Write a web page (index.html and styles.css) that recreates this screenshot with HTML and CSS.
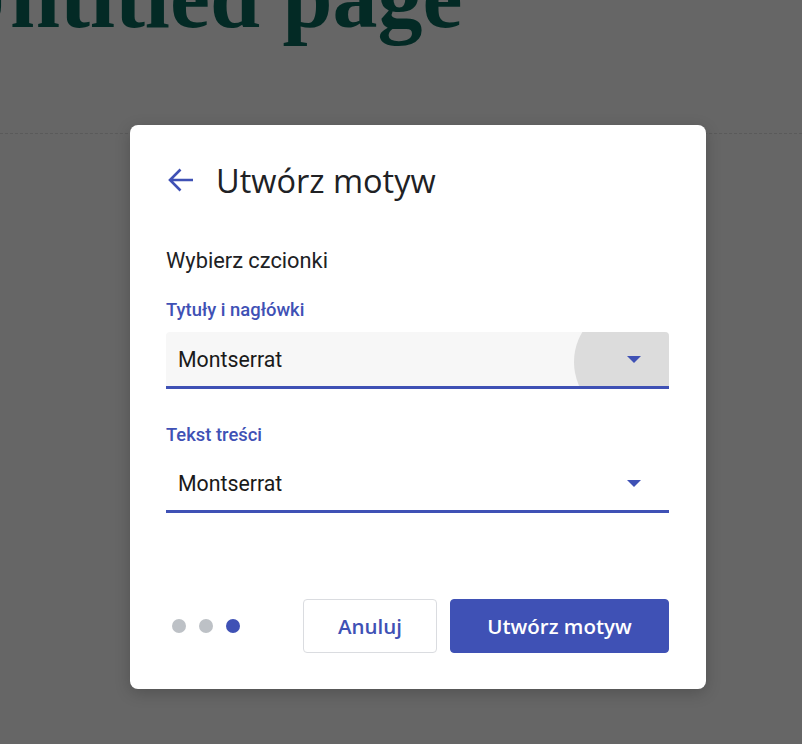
FILE: index.html
```html
<!DOCTYPE html>
<html lang="pl">
<head>
<meta charset="utf-8">
<title>Utwórz motyw</title>
<link rel="stylesheet" href="styles.css">
</head>
<body>
<div class="page">
  <h1 class="page-title">Untitled page</h1>
  <div class="page-rule"></div>
</div>
<div class="dialog" role="dialog">
  <div class="dialog-head">
    <svg class="back" width="28" height="26" viewBox="0 0 28 26" aria-hidden="true">
      <path d="M26 13H3.5M13.5 2.5L3 13l10.5 10.5" fill="none" stroke="#3f51b5" stroke-width="2.6" stroke-linecap="butt" stroke-linejoin="miter"/>
    </svg>
    <h2 class="dialog-title">Utwórz motyw</h2>
  </div>
  <p class="subtitle">Wybierz czcionki</p>
  <div class="field">
    <div class="field-label">Tytuły i nagłówki</div>
    <div class="select filled">
      <span class="select-value">Montserrat</span>
      <span class="ripple"></span>
      <span class="caret"></span>
    </div>
  </div>
  <div class="field">
    <div class="field-label">Tekst treści</div>
    <div class="select">
      <span class="select-value">Montserrat</span>
      <span class="caret"></span>
    </div>
  </div>
  <div class="dialog-foot">
    <div class="dots">
      <span class="dot"></span>
      <span class="dot"></span>
      <span class="dot active"></span>
    </div>
    <div class="actions">
      <button class="btn btn-outline">Anuluj</button>
      <button class="btn btn-primary">Utwórz motyw</button>
    </div>
  </div>
</div>
</body>
</html>
```
FILE: styles.css
```css
* { box-sizing: border-box; }
html, body {
  margin: 0;
  padding: 0;
  height: 100%;
}
body {
  background: #666666;
  font-family: Roboto, "Noto Sans", sans-serif;
  overflow: hidden;
  position: relative;
}
.page-title {
  margin: -48px 0 0 -55px;
  font-family: "Liberation Serif", serif;
  font-weight: bold;
  font-size: 90px;
  line-height: 90px;
  letter-spacing: 0;
  color: #032a25;
  white-space: nowrap;
}
.page-rule {
  margin-top: 91px;
  border-top: 1px dashed #5a5a5a;
}
.dialog {
  position: absolute;
  left: 130px;
  top: 125px;
  width: 576px;
  height: 564px;
  background: #ffffff;
  border-radius: 8px;
  box-shadow: 0 4px 16px rgba(0, 0, 0, 0.2);
  padding: 34px 37px 36px 36px;
  display: flex;
  flex-direction: column;
}
.dialog-head {
  display: flex;
  align-items: center;
  height: 42px;
}
.back {
  margin-left: 1px;
  margin-right: 21px;
  flex: none;
}
.dialog-title {
  margin: 0;
  font-family: "Open Sans", Roboto, sans-serif;
  font-weight: 400;
  font-size: 32.5px;
  color: #202124;
}
.subtitle {
  margin: 48px 0 0;
  font-size: 21.8px;
  line-height: 24px;
  color: #202124;
}
.field {
  margin-top: 27px;
}
.field + .field {
  margin-top: 36px;
}
.field-label {
  font-size: 18.4px;
  font-weight: 500;
  line-height: 20px;
  color: #3f51b5;
}
.select {
  position: relative;
  overflow: hidden;
  margin-top: 12px;
  height: 57px;
  border-radius: 4px 4px 0 0;
  border-bottom: 3px solid #3f51b5;
  display: flex;
  align-items: center;
  padding: 0 12px;
}
.field + .field .select {
  margin-top: 11px;
}
.select.filled {
  background: #f7f7f7;
}
.select-value {
  position: relative;
  z-index: 1;
  flex: 1;
  font-size: 21.3px;
  color: #1a1a1a;
}
.ripple {
  position: absolute;
  left: 408px;
  top: -28px;
  width: 116px;
  height: 116px;
  border-radius: 50%;
  background: radial-gradient(circle, #dcdcdc 0, #dcdcdc 84%, #e6e6e6 93%, rgba(247,247,247,0) 100%);
}
.caret {
  position: relative;
  z-index: 1;
  margin-right: 16px;
  width: 0;
  height: 0;
  border-left: 7px solid transparent;
  border-right: 7px solid transparent;
  border-top: 7px solid #3f51b5;
}
.dialog-foot {
  margin-top: auto;
  display: flex;
  align-items: center;
  justify-content: space-between;
}
.dots {
  display: flex;
  gap: 13px;
  padding-left: 6px;
}
.dot {
  width: 14px;
  height: 14px;
  border-radius: 50%;
  background: #bdc1c6;
}
.dot.active {
  background: #3f51b5;
}
.actions {
  display: flex;
  gap: 13px;
}
.btn {
  height: 54px;
  padding: 0;
  font-family: "Open Sans", Roboto, sans-serif;
  font-size: 20.5px;
  font-weight: 600;
  border-radius: 4px;
  cursor: pointer;
}
.btn-outline {
  width: 134px;
  background: #ffffff;
  border: 1px solid #dadce0;
  color: #3f51b5;
}
.btn-primary {
  width: 219px;
  background: #3f51b5;
  border: 1px solid #3f51b5;
  color: #ffffff;
}
```
